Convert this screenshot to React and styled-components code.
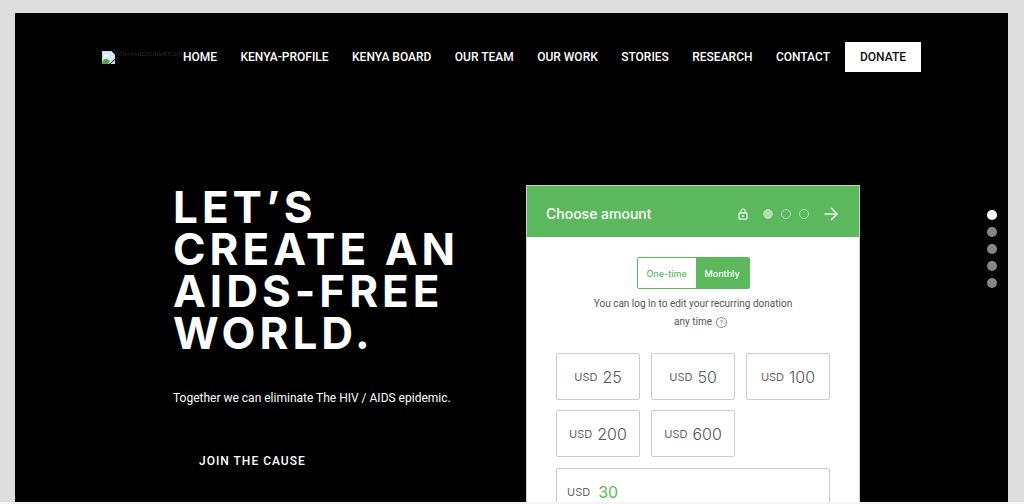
import { styled, createGlobalStyle } from "styled-components";

const links = [
	"Home",
	"Kenya-Profile",
	"Kenya Board",
	"Our Team",
	"Our Work",
	"Stories",
	"Research",
	"Contact",
];
const amounts = [25, 50, 100, 200, 600];
const sections = ["Intro", "About", "Work", "Stories", "Contact"];

const BrokenImage = () => (
	<svg width="13" height="13" viewBox="0 0 13 13" aria-hidden="true">
		<path d="M0 0h9l4 4v4l-6 5H0z" fill="#c4dcf4" />
		<path d="M1 1h7v4h4v2l-5 5H1z" fill="#d6e9fb" />
		<path d="M9 0l4 4H9z" fill="#f4f8fc" />
		<path d="M2 5c0-2 3-2 3-1 2 0 2 2 1 2H2z" fill="#fff" />
		<path d="M0 12c1-3 3-5 5-4l3 2-2 3H0z" fill="#4fa83d" />
		<path d="M13 9v4H8z" fill="#d5dde6" />
	</svg>
);

const LockIcon = () => (
	<svg width="10" height="12" viewBox="0 0 10 12" fill="none" stroke="#e3f3e3" aria-hidden="true">
		<rect x="1" y="5" width="8" height="6.2" rx="0.6" strokeWidth="1.3" />
		<path d="M3 5V3a2 2 0 0 1 4 0v2" strokeWidth="1.2" />
		<path d="M4 8h2" strokeWidth="1.4" />
	</svg>
);

const ArrowIcon = () => (
	<svg width="14" height="14" viewBox="0 0 14 14" fill="none" stroke="#e3f3e3" strokeWidth="1.6" aria-hidden="true">
		<path d="M0.5 7H13M7 1l6 6-6 6" />
	</svg>
);

const GlobalStyle = createGlobalStyle`
	* {
		box-sizing: border-box;
	}
	body {
		margin: 0;
		background-color: #f4f4f4;
	}
	button, input {
		font-family: inherit;
	}
	a {
		color: inherit;
		text-decoration: none;
	}
`;

const Frame = styled.div`
	height: 100vh;
	padding-bottom: 2px;
	overflow: hidden;
	background: linear-gradient(#dddddd, #dddddd) top / 100% calc(100% - 2px) no-repeat;
	font-family: Roboto, sans-serif;
`;

const Stage = styled.main`
	position: relative;
	height: calc(100% - 13px);
	margin: 13px 16px 0 15px;
	overflow: hidden;
	background-color: #000;
	color: #fff;
`;

const Header = styled.header`
	display: flex;
	align-items: center;
	padding: 29px 87px 0;
	font-size: 12px;
	font-weight: 500;
	line-height: 30px;
	text-transform: uppercase;
`;

const Logo = styled.a`
	display: flex;
	width: 81px;
	flex-shrink: 0;
	font-size: 6px;
	font-weight: 400;
	line-height: 6px;
	color: #2a2626;
	svg {
		flex-shrink: 0;
	}
`;

const Nav = styled.nav`
	display: flex;
	flex: 1;
	justify-content: space-between;
	padding-right: 15px;
`;

const NavLink = styled.a`
	white-space: nowrap;
`;

const Donate = styled.a`
	width: 76px;
	background-color: #fff;
	color: #111;
	text-align: center;
`;

const Hero = styled.section`
	display: grid;
	grid-template-columns: 1fr 334px;
	padding: 113px 148px 0 158px;
`;

const Title = styled.h1`
	margin: 1px 0 0;
	font-family: Inter, sans-serif;
	font-size: 44px;
	font-weight: 700;
	line-height: 42px;
	letter-spacing: 4px;
	text-transform: uppercase;
`;

const Lead = styled.p`
	margin: 34px 0 0;
	font-size: 12px;
	line-height: 20px;
`;

const JoinLink = styled.a`
	display: inline-block;
	margin: 43px 0 0 26px;
	font-size: 12px;
	font-weight: 500;
	line-height: 20px;
	letter-spacing: 1px;
	text-transform: uppercase;
`;

const Card = styled.form`
	border: 1px solid #cfcfcf;
	background-color: #fff;
	font-family: Inter, sans-serif;
	color: #555;
`;

const CardHeader = styled.div`
	display: flex;
	align-items: center;
	height: 51px;
	padding: 4px 21px 0 19px;
	background-color: #5cb85c;
	color: #fff;
`;

const CardTitle = styled.h2`
	flex: 1;
	margin: 0;
	font-size: 14px;
	font-weight: 500;
`;

const Steps = styled.div`
	display: flex;
	gap: 8px;
	margin: 0 15px;
`;

const Step = styled.span`
	width: 10px;
	height: 10px;
	border: 1px solid #b4dfb4;
	border-radius: 50%;
	background-color: ${({ $active }) => ($active ? "#b4dfb4" : "transparent")};
`;

const Next = styled.button`
	display: flex;
	padding: 0;
	border: 0;
	background: none;
`;

const CardBody = styled.div`
	padding: 20px 29px;
`;

const Toggle = styled.div`
	display: flex;
	width: 113px;
	margin: 0 auto;
	border: 1px solid #5cb85c;
	border-radius: 2px;
`;

const ToggleButton = styled.button`
	flex: auto;
	height: 30px;
	padding: 0;
	border: 0;
	background-color: ${({ $active }) => ($active ? "#5cb85c" : "#fff")};
	color: ${({ $active }) => ($active ? "#fff" : "#5cb85c")};
	font-size: 9px;
	font-weight: 500;
`;

const Note = styled.p`
	margin: 6px 0 0;
	font-family: Roboto, sans-serif;
	font-size: 10px;
	line-height: 18px;
	text-align: center;
	white-space: nowrap;
`;

const NoteEnd = styled.span`
	padding-left: 15px;
`;

const Help = styled.button`
	width: 11px;
	height: 11px;
	margin-left: 4px;
	padding: 0;
	border: 1px solid #888;
	border-radius: 50%;
	background: none;
	color: #888;
	font-size: 8px;
	line-height: 9px;
`;

const Amounts = styled.div`
	display: grid;
	grid-template-columns: repeat(3, 1fr);
	gap: 10px 11px;
	margin-top: 22px;
`;

const Amount = styled.button`
	display: flex;
	align-items: center;
	justify-content: center;
	gap: 5px;
	height: 47px;
	padding: 0;
	border: 1px solid #ccc;
	border-radius: 2px;
	background-color: #fff;
	color: #555;
	font-size: 16px;
	font-weight: 300;
`;

const Currency = styled.span`
	font-size: 11px;
	font-weight: 400;
	color: #666;
`;

const Custom = styled.label`
	display: flex;
	align-items: center;
	gap: 8px;
	height: 47px;
	margin-top: 11px;
	padding: 0 10px;
	border: 1px solid #ccc;
	border-radius: 2px;
`;

const CustomInput = styled.input`
	flex: 1;
	min-width: 0;
	padding: 0;
	border: 0;
	outline: 0;
	color: #5cb85c;
	font-size: 16px;
`;

// sits over the right edge of the slide
const Dots = styled.nav`
	position: absolute;
	top: 197px;
	right: 11px;
	display: grid;
	gap: 7px;
`;

const Dot = styled.a`
	width: 10px;
	height: 10px;
	border-radius: 50%;
	background-color: ${({ $active }) => ($active ? "#fff" : "#8a8482")};
`;

const App = () => {
	return (
		<Frame>
			<GlobalStyle />
			<Stage>
				<Header>
					<Logo href="#home">
						<BrokenImage />
						<span>KENYAAIDSRUNMERSKN.LL</span>
					</Logo>
					<Nav>
						{links.map(link => (
							<NavLink key={link} href="#">
								{link}
							</NavLink>
						))}
					</Nav>
					<Donate href="#donate">Donate</Donate>
				</Header>

				<Hero>
					<div>
						<Title>
							Let’s
							<br />
							create an
							<br />
							AIDS-free
							<br />
							world.
						</Title>
						<Lead>Together we can eliminate The HIV / AIDS epidemic.</Lead>
						<JoinLink href="#join">Join the cause</JoinLink>
					</div>

					<Card>
						<CardHeader>
							<CardTitle>Choose amount</CardTitle>
							<LockIcon />
							<Steps>
								<Step $active />
								<Step />
								<Step />
							</Steps>
							<Next type="button" aria-label="Next">
								<ArrowIcon />
							</Next>
						</CardHeader>
						<CardBody>
							<Toggle>
								<ToggleButton type="button">One-time</ToggleButton>
								<ToggleButton type="button" $active>
									Monthly
								</ToggleButton>
							</Toggle>
							<Note>
								You can log in to edit your recurring donation
								<br />
								<NoteEnd>
									any time
									<Help type="button" aria-label="Help">
										?
									</Help>
								</NoteEnd>
							</Note>
							<Amounts>
								{amounts.map(amount => (
									<Amount key={amount} type="button">
										<Currency>USD</Currency>
										{amount}
									</Amount>
								))}
							</Amounts>
							<Custom>
								<Currency>USD</Currency>
								<CustomInput type="text" defaultValue="30" />
							</Custom>
						</CardBody>
					</Card>
				</Hero>

				<Dots aria-label="Sections">
					{sections.map((section, i) => (
						<Dot key={section} href="#" aria-label={section} $active={i === 0} />
					))}
				</Dots>
			</Stage>
		</Frame>
	);
};

export default App;
